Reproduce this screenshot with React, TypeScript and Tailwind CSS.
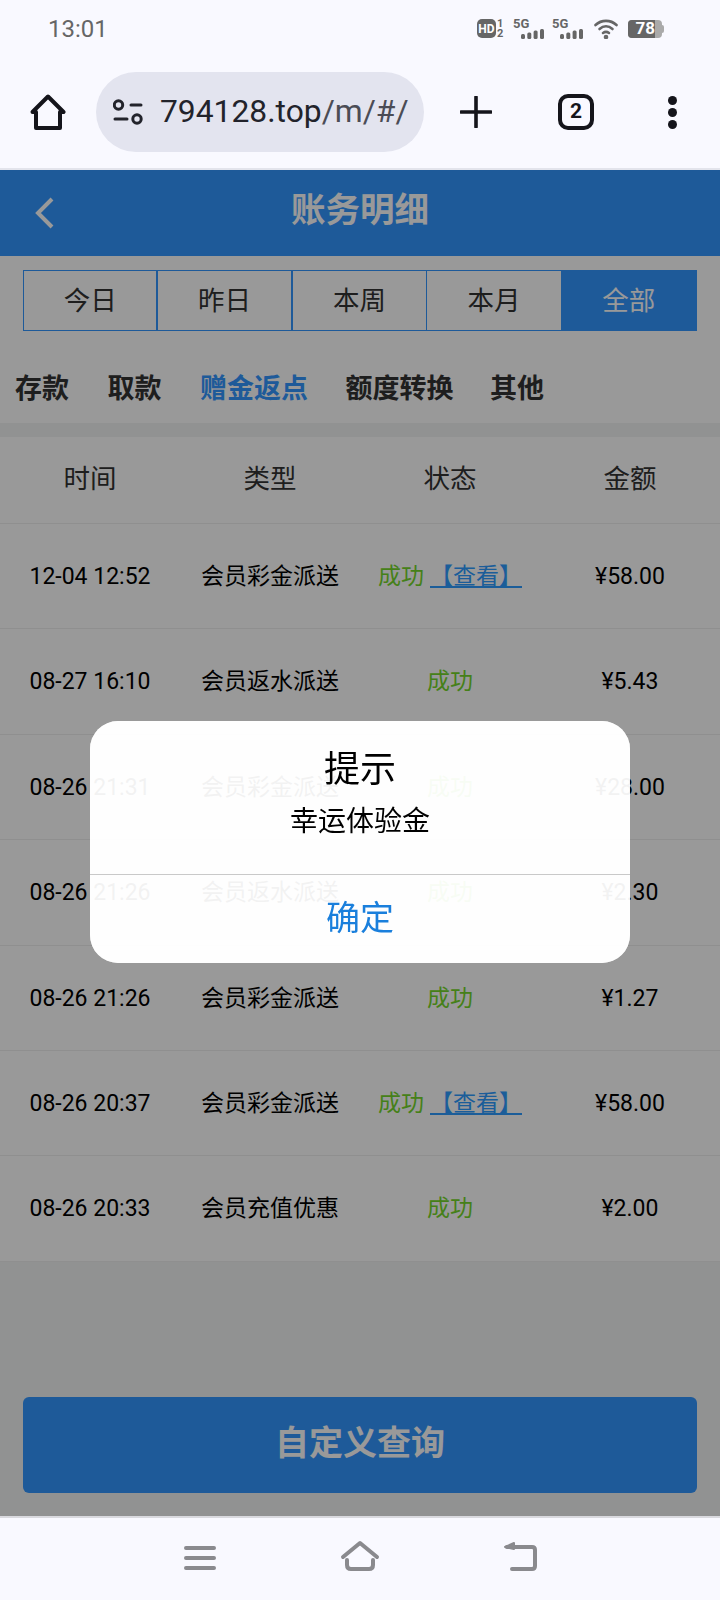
import React from "react";

const FONT = "font-['Roboto','Noto_Sans_CJK_SC',sans-serif]";

const rows = [
  { time: "12-04 12:52", type: "会员彩金派送", link: true, amount: "¥58.00" },
  { time: "08-27 16:10", type: "会员返水派送", link: false, amount: "¥5.43" },
  { time: "08-26 21:31", type: "会员彩金派送", link: false, amount: "¥28.00" },
  { time: "08-26 21:26", type: "会员返水派送", link: false, amount: "¥2.30" },
  { time: "08-26 21:26", type: "会员彩金派送", link: false, amount: "¥1.27" },
  { time: "08-26 20:37", type: "会员彩金派送", link: true, amount: "¥58.00" },
  { time: "08-26 20:33", type: "会员充值优惠", link: false, amount: "¥2.00" },
];

const Signal = () => (
  <div className="w-[31px] h-[20px] relative">
    <span className="absolute left-0 top-[-2px] text-[13px] leading-[13px] font-bold text-[#666]">5G</span>
    <svg width="23" height="10" viewBox="0 0 23 10" className="absolute right-0 bottom-0">
      <rect x="0" y="5" width="4" height="5" rx="1.500" fill="#666" />
      <rect x="6.300" y="3.500" width="4" height="6.500" rx="1.500" fill="#666" />
      <rect x="12.600" y="1.500" width="4" height="8.500" rx="1.500" fill="#666" />
      <rect x="19" y="0" width="4" height="10" rx="1.500" fill="#666" />
    </svg>
  </div>
);

const StatusBar = () => (
  <div className="h-[56px] flex items-center justify-between pl-[48px] pr-[56px] text-[#666]">
    <span className="text-[24px] pt-[1px]">13:01</span>
    <div className="flex items-center pt-[1px]">
      <div className="flex items-center gap-[1px]">
        <span className="w-[19px] h-[19px] rounded-[5px] bg-[#666] text-white text-[12px] font-bold flex items-center justify-center">
          HD
        </span>
        <div className="flex flex-col w-[8px] text-[11px] leading-[10px] font-bold">
          <span>1</span>
          <span>2</span>
        </div>
      </div>
      <div className="ml-[8px]">
        <Signal />
      </div>
      <div className="ml-[8px]">
        <Signal />
      </div>
      <svg width="24" height="20" viewBox="0 0 24 20" fill="none" stroke="#666" strokeWidth="2.600" strokeLinecap="round" className="ml-[11px]">
        <path d="M1.500 6C7.500 0.500 16.500 0.500 22.500 6" />
        <path d="M5.500 10C9.500 6.500 14.500 6.500 18.500 10" />
        <path d="M9 14C11 12.500 13 12.500 15 14" />
        <circle cx="12" cy="18" r="1" fill="#666" />
      </svg>
      <div className="ml-[10px] flex items-center">
        <div className="w-[34px] h-[18px] rounded-[4px] bg-[#aaa] overflow-hidden">
          <div className="w-[27px] h-full bg-[#666] flex items-center justify-end">
            <span className="text-white text-[17px] font-bold leading-none">78</span>
          </div>
        </div>
        <div className="w-[2px] h-[8px] rounded-r-[2px] bg-[#aaa]" />
      </div>
    </div>
  </div>
);

const Toolbar = () => (
  <div className="h-[114px] flex items-start border-b-2 border-[#e3e4ec]">
    <div className="w-[96px] h-[80px] mt-[16px] flex items-center justify-center">
      <svg width="36" height="36" viewBox="0 0 36 36" fill="none" stroke="#15151b" strokeWidth="4" strokeLinejoin="round">
        <path d="M18 2.500L33.500 18H30V34H6V18H2.500Z" />
      </svg>
    </div>
    <div className="w-[328px] h-[80px] mt-[16px] rounded-full bg-[#e3e4ef] flex items-center pl-[17px]">
      <svg width="30" height="26" viewBox="0 0 30 26" fill="none" stroke="#22232b" strokeWidth="3" strokeLinecap="round">
        <circle cx="5.500" cy="6" r="4.200" />
        <path d="M18 6H28" />
        <path d="M2 20H14" />
        <circle cx="24" cy="20" r="4.200" />
      </svg>
      <span className="ml-[17px] text-[31.800px] text-[#22232b] whitespace-nowrap">
        794128.top<span className="text-[#4b4c55]">/m/#/</span>
      </span>
    </div>
    <div className="h-[80px] mt-[16px] flex items-center">
      <svg width="32" height="32" viewBox="0 0 32 32" className="ml-[36px]" stroke="#15151b" strokeWidth="3.600" strokeLinecap="round">
        <path d="M16 1V31M1 16H31" />
      </svg>
      <div className="ml-[66px] w-[36px] h-[36px] rounded-[10px] border-[4px] border-[#15151b] flex items-center justify-center text-[21px] font-bold text-[#15151b]">
        2
      </div>
      <div className="ml-[74px] flex flex-col gap-[3px]">
        <span className="w-[9px] h-[9px] rounded-full bg-[#15151b]" />
        <span className="w-[9px] h-[9px] rounded-full bg-[#15151b]" />
        <span className="w-[9px] h-[9px] rounded-full bg-[#15151b]" />
      </div>
    </div>
  </div>
);

const Page = () => (
  <div className="h-[1346px] flex flex-col bg-[#f2f4f4]">
    {/* Header */}
    <div className="h-[86px] shrink-0 bg-[#3396ff] flex items-center justify-center relative">
      <svg width="22" height="32" viewBox="0 0 22 32" fill="none" stroke="white" strokeWidth="4" className="absolute left-[34px] top-[27px]">
        <path d="M18 2L4 16L18 30" />
      </svg>
      <span className="text-[34.500px] font-bold text-white mb-[5px]">账务明细</span>
    </div>

    {/* Top filter + categories */}
    <div className="bg-white h-[167px] shrink-0 px-[23px] pt-[14px]">
      <div className="grid grid-cols-5 h-[61px] border border-[#3396ff] text-[26.500px] text-[#333]">
        <div className="border-r-2 border-[#3396ff] flex items-center justify-center">今日</div>
        <div className="border-r-2 border-[#3396ff] flex items-center justify-center">昨日</div>
        <div className="border-r border-[#3396ff] flex items-center justify-center">本周</div>
        <div className="border-r border-[#3396ff] flex items-center justify-center">本月</div>
        <div className="bg-[#3396ff] text-white flex items-center justify-center -mb-[1px]">全部</div>
      </div>
      <div className="flex gap-[38.500px] -mx-[8px] mt-[38px] text-[27px] font-bold text-[#333]">
        <span>存款</span>
        <span>取款</span>
        <span className="text-[#3396ff]">赠金返点</span>
        <span className="-ml-[1px]">额度转换</span>
        <span className="-ml-[2px]">其他</span>
      </div>
    </div>

    {/* Table */}
    <div className="mt-[14px] bg-white">
      <div className="grid grid-cols-4 h-[87px] pb-[2px] items-center text-center text-[26.500px] text-[#333] border-b border-[#eee]">
        <span>时间</span>
        <span>类型</span>
        <span>状态</span>
        <span>金额</span>
      </div>
      {rows.map((r, i) => (
        <div key={i} className="grid grid-cols-4 h-[105.400px] pt-[2px] items-center text-center text-[23px] text-black border-b border-[#eee]">
          <span>{r.time}</span>
          <span>{r.type}</span>
          <span className="text-[#74d62a] whitespace-nowrap">
            成功
            {r.link && <span className="ml-[6px] text-[#2e9bff] underline underline-offset-2">【查看】</span>}
          </span>
          <span>{r.amount}</span>
        </div>
      ))}
    </div>

    {/* Custom query button */}
    <div className="mt-auto px-[23px] pb-[23px]">
      <div className="h-[96px] pb-[3px] rounded-[6px] bg-[#3396ff] text-white text-[34px] font-bold flex items-center justify-center">
        自定义查询
      </div>
    </div>
  </div>
);

const Dialog = () => (
  <div className="absolute left-[90px] top-[551px] w-[540px] h-[242px] rounded-[28px] bg-white/95 backdrop-brightness-150 flex flex-col">
    <div className="h-[154px] border-b border-[#c9c9c9] flex flex-col items-center pt-[25px]">
      <span className="text-[36px] leading-[48px] text-black">提示</span>
      <span className="text-[28px] leading-[38px] mt-[9px] text-black">幸运体验金</span>
    </div>
    <div className="flex-1 pb-[2px] flex items-center justify-center text-[34px] text-[#1a7fdc]">确定</div>
  </div>
);

const NavBar = () => (
  <div className="h-[84px] border-t-2 border-[#d9d9de] relative">
    <svg width="720" height="82" viewBox="0 1518 720 82" fill="none" stroke="#8a8a8e" strokeWidth="4" strokeLinecap="round" strokeLinejoin="round">
      <path d="M186 1548H214M186 1558H214M186 1568H214" />
      <path d="M343 1557L360 1543L377 1557" />
      <path d="M347 1560V1565Q347 1569 351 1569H369Q373 1569 373 1565V1560" />
      <path d="M507 1547H532Q535 1547 535 1550V1566Q535 1569 532 1569H512" />
      <path d="M505 1547L514 1543V1549Z" fill="#8a8a8e" strokeWidth="2" />
    </svg>
  </div>
);

export default function App() {
  return (
    <div className={`${FONT} w-[720px] h-[1600px] overflow-hidden bg-[#f9f9ff] flex flex-col`}>
      <StatusBar />
      <Toolbar />
      <div className="relative shrink-0">
        <Page />
        <div className="absolute inset-0 bg-black/40" />
        <Dialog />
      </div>
      <NavBar />
    </div>
  );
}
